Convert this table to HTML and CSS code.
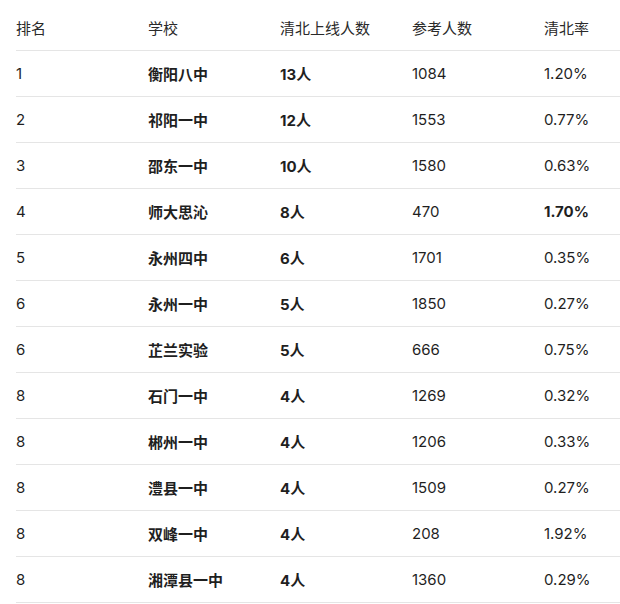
FILE: index.html
```html
<!DOCTYPE html>
<html lang="zh">
<head>
<meta charset="utf-8">
<link rel="stylesheet" href="styles.css">
</head>
<body>
<div class="page">
  <div class="table">
    <div class="row head"><span>排名</span><span>学校</span><span>清北上线人数</span><span>参考人数</span><span>清北率</span></div>
    <div class="row"><span>1</span><span class="b">衡阳八中</span><span class="b">13人</span><span>1084</span><span>1.20%</span></div>
    <div class="row"><span>2</span><span class="b">祁阳一中</span><span class="b">12人</span><span>1553</span><span>0.77%</span></div>
    <div class="row"><span>3</span><span class="b">邵东一中</span><span class="b">10人</span><span>1580</span><span>0.63%</span></div>
    <div class="row"><span>4</span><span class="b">师大思沁</span><span class="b">8人</span><span>470</span><span class="b">1.70%</span></div>
    <div class="row"><span>5</span><span class="b">永州四中</span><span class="b">6人</span><span>1701</span><span>0.35%</span></div>
    <div class="row"><span>6</span><span class="b">永州一中</span><span class="b">5人</span><span>1850</span><span>0.27%</span></div>
    <div class="row"><span>6</span><span class="b">芷兰实验</span><span class="b">5人</span><span>666</span><span>0.75%</span></div>
    <div class="row"><span>8</span><span class="b">石门一中</span><span class="b">4人</span><span>1269</span><span>0.32%</span></div>
    <div class="row"><span>8</span><span class="b">郴州一中</span><span class="b">4人</span><span>1206</span><span>0.33%</span></div>
    <div class="row"><span>8</span><span class="b">澧县一中</span><span class="b">4人</span><span>1509</span><span>0.27%</span></div>
    <div class="row"><span>8</span><span class="b">双峰一中</span><span class="b">4人</span><span>208</span><span>1.92%</span></div>
    <div class="row"><span>8</span><span class="b">湘潭县一中</span><span class="b">4人</span><span>1360</span><span>0.29%</span></div>
  </div>
</div>
</body>
</html>
```
FILE: styles.css
```css
html, body {
  margin: 0;
  padding: 0;
  background: #ffffff;
}
.page {
  padding: 5px 0 0 16px;
  font-family: Inter, "Noto Sans CJK SC", sans-serif;
  font-size: 15px;
  color: #1f1f1f;
}
.table {
  width: 604px;
}
.row {
  display: grid;
  grid-template-columns: 132px 132px 132px 132px 1fr;
  height: 45px;
  align-items: center;
  border-bottom: 1px solid #e5e5e5;
}
.head {
  color: #2a2a2a;
}
.b {
  font-weight: 700;
}
```
